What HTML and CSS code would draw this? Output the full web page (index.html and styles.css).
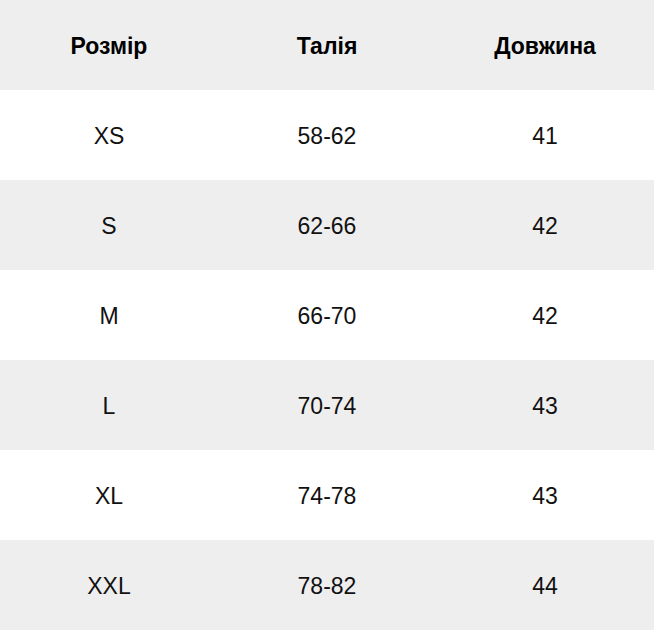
FILE: index.html
```html
<!DOCTYPE html>
<html lang="uk">
<head>
<meta charset="utf-8">
<title>Розмірна сітка</title>
<link rel="stylesheet" href="styles.css">
</head>
<body>
<table class="size-table">
  <thead>
    <tr class="row row-gray">
      <th>Розмір</th>
      <th>Талія</th>
      <th>Довжина</th>
    </tr>
  </thead>
  <tbody>
    <tr class="row"><td>XS</td><td>58-62</td><td>41</td></tr>
    <tr class="row row-gray"><td>S</td><td>62-66</td><td>42</td></tr>
    <tr class="row"><td>M</td><td>66-70</td><td>42</td></tr>
    <tr class="row row-gray"><td>L</td><td>70-74</td><td>43</td></tr>
    <tr class="row"><td>XL</td><td>74-78</td><td>43</td></tr>
    <tr class="row row-gray"><td>XXL</td><td>78-82</td><td>44</td></tr>
  </tbody>
</table>
</body>
</html>
```
FILE: styles.css
```css
html, body {
  margin: 0;
  padding: 0;
  background: #ffffff;
}
.size-table {
  width: 654px;
  border-collapse: collapse;
  table-layout: fixed;
  font-family: "Liberation Sans", Arial, sans-serif;
  font-size: 23px;
  color: #111111;
}
.size-table th,
.size-table td {
  height: 90px;
  padding: 2px 0 0 0;
  box-sizing: border-box;
  text-align: center;
  vertical-align: middle;
}
.size-table th {
  font-weight: bold;
  color: #000000;
}
.size-table td {
  font-weight: normal;
}
.row {
  background: #ffffff;
}
.row-gray {
  background: #eeeeee;
}
```
